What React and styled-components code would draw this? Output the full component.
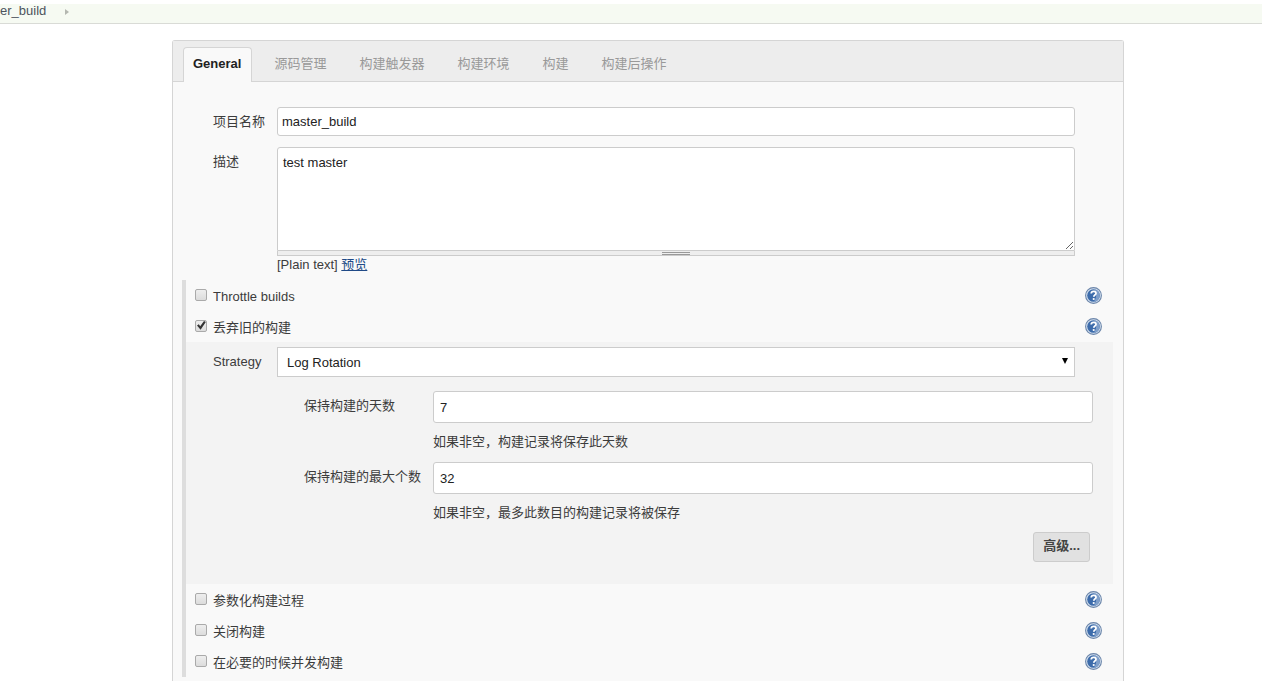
import styled, { createGlobalStyle } from "styled-components";

const GlobalStyle = createGlobalStyle`
  *,
  *::after {
    box-sizing: border-box;
  }
  body {
    margin: 0;
    background-color: white;
    color: #3c3c3c;
    font-family: "Liberation Sans", "Noto Sans CJK SC", sans-serif;
    font-size: 13px;
    line-height: 18px;
  }
  input, textarea, select, button {
    margin: 0;
    font: inherit;
  }
`;

const Page = styled.div`
  padding-top: 4px;
`;

const Breadcrumbs = styled.nav`
  display: flex;
  align-items: center;
  gap: 19px;
  height: 20px;
  padding-bottom: 6px;
  background-color: #f6faf2;
  border-bottom: 1px solid #d9dbd6;
`;
const Crumb = styled.a`
  color: #4d545d;
  text-decoration: none;
`;
const CrumbArrow = styled.span`
  border: 3px solid transparent;
  border-left: 4px solid #b4b7b0;
  border-right: 0;
  margin-top: 3px;
`;

const Panel = styled.main`
  margin: 16px 138px 0 172px;
  padding-bottom: 4px;
  background-color: #f9f9f9;
  border: 1px solid #d5d5d5;
  border-bottom: 0;
  border-radius: 3px 3px 0 0;
`;
const TabBar = styled.div`
  display: flex;
  align-items: flex-end;
  gap: 12px;
  height: 41px;
  padding-left: 10px;
  background-color: #ededed;
  border-bottom: 1px solid #d5d5d5;
`;
const Tab = styled.button`
  height: ${(props) => (props.$active ? 35 : 34)}px;
  margin-bottom: ${(props) => (props.$active ? -1 : 0)}px;
  padding: 0 10px 2px 9px;
  background-color: ${(props) => (props.$active ? "#f9f9f9" : "transparent")};
  border: 1px solid ${(props) => (props.$active ? "#d5d5d5" : "transparent")};
  border-bottom: 0;
  border-radius: 4px 4px 0 0;
  color: ${(props) => (props.$active ? "#222" : "#999")};
  font-weight: ${(props) => (props.$active ? "bold" : "normal")};
  white-space: nowrap;
`;

const Fields = styled.div`
  display: grid;
  gap: 11px;
  padding: 25px 48px 6px 40px;
`;
const Field = styled.div`
  display: grid;
  grid-template-columns: ${(props) => props.$labelWidth || 64}px 1fr;
`;
const Label = styled.label`
  padding-top: 6px;
`;
const Input = styled.input`
  display: block;
  width: 100%;
  height: ${(props) => (props.$large ? 32 : 29)}px;
  padding: 0 ${(props) => (props.$large ? 6 : 4)}px;
  background-color: white;
  border: 1px solid #ccc;
  border-radius: 3px;
  color: #222;
`;
const TextArea = styled.textarea`
  display: block;
  width: 100%;
  height: 104px;
  padding: 6px 5px;
  background-color: white;
  border: 1px solid #ccc;
  border-radius: 3px 3px 0 0;
  color: #222;
`;
const Handle = styled.div`
  display: flex;
  justify-content: center;
  align-items: center;
  height: 5px;
  background-color: #eee;
  border: 1px solid #ccc;
  border-top: 0;

  &::after {
    content: "";
    width: 28px;
    height: 3px;
    border: solid #999;
    border-width: 1px 0;
  }
`;
const Link = styled.a`
  color: #204a87;
`;

const Section = styled.section`
  margin: 0 10px 0 9px;
  border-left: 4px solid #ddd;
`;
const OptionRow = styled.div`
  display: flex;
  align-items: center;
  justify-content: space-between;
  height: 31px;
  padding: 0 11px 0 9px;
`;
const OptionLabel = styled.label`
  display: flex;
  align-items: center;
  gap: 6px;
  padding-top: 2px;
`;
const Checkbox = styled.input.attrs({ type: "checkbox" })`
  appearance: none;
  width: 12px;
  height: 12px;
  margin-bottom: 4px;
  background: linear-gradient(#eee, #dcdcdc);
  border: 1px solid #aaa;
  border-radius: 2px;

  &:checked::after {
    content: "";
    display: block;
    height: 10px;
    background-color: #333;
    clip-path: polygon(10% 50%, 28% 38%, 42% 58%, 80% 4%, 98% 16%, 46% 92%);
  }
`;
const HelpButton = styled.button`
  display: flex;
  padding: 0;
  background: none;
  border: 0;
`;

const Nested = styled.div`
  padding: 5px 0 22px;
  background-color: #f3f3f3;
`;
const StrategyField = styled(Field)`
  padding: 0 38px 0 27px;
`;
const SelectBox = styled.div`
  display: grid;
  align-items: center;

  select,
  svg {
    grid-area: 1 / 1;
  }
  svg {
    justify-self: end;
    margin: 0 7px 3px;
    pointer-events: none;
  }
`;
const Select = styled.select`
  appearance: none;
  width: 100%;
  height: 30px;
  padding: 2px 9px 0;
  background-color: white;
  border: 1px solid #ccc;
  border-radius: 0;
  color: #222;
`;
const RotationFields = styled.div`
  display: grid;
  gap: 11px;
  padding: 14px 20px 0 118px;
`;
const Hint = styled.p`
  margin: 0;
  padding-top: 10px;
`;
const Actions = styled.div`
  display: flex;
  justify-content: flex-end;
  padding: 10px 23px 0 0;
`;
const Button = styled.button`
  height: 30px;
  padding: 0 9px 2px;
  background-color: #e1e1e1;
  border: 1px solid #ccc;
  border-radius: 3px;
  color: #444;
  font-weight: bold;
`;

const tabs = ["General", "源码管理", "构建触发器", "构建环境", "构建", "构建后操作"];

function HelpIcon() {
  return (
    <svg width="17" height="17" viewBox="0 0 17 17" fill="none">
      <circle cx="8.5" cy="8.5" r="7.9" fill="#d5e1ef" stroke="#6d87ab" strokeWidth="1.1" />
      <circle cx="8.5" cy="8.5" r="6.3" fill="#3d6cab" />
      <path d="M8.5 2.2a6.3 6.3 0 0 1 0 12.6c3-3 4-8 0-12.6Z" fill="#7f9fca" />
      <path
        d="M6.2 6.5c.1-1.5 1.1-2.2 2.4-2.2 1.4 0 2.4.8 2.4 2 0 1.5-2.2 1.8-2.2 3.5"
        stroke="white"
        strokeWidth="1.8"
      />
      <circle cx="8.7" cy="12" r="1.1" fill="white" />
    </svg>
  );
}

function Option({ label, checked }) {
  return (
    <OptionRow>
      <OptionLabel>
        <Checkbox defaultChecked={checked} />
        {label}
      </OptionLabel>
      <HelpButton type="button" aria-label={`Help: ${label}`}>
        <HelpIcon />
      </HelpButton>
    </OptionRow>
  );
}

function RotationField({ id, label, value, hint }) {
  return (
    <Field $labelWidth={129}>
      <Label htmlFor={id}>{label}</Label>
      <div>
        <Input id={id} $large defaultValue={value} />
        <Hint>{hint}</Hint>
      </div>
    </Field>
  );
}

function App() {
  return (
    <Page>
      <GlobalStyle />
      <Breadcrumbs>
        <Crumb href="#">er_build</Crumb>
        <CrumbArrow />
      </Breadcrumbs>
      <Panel>
        <TabBar>
          {tabs.map((tab, index) => (
            <Tab key={tab} type="button" $active={index === 0}>
              {tab}
            </Tab>
          ))}
        </TabBar>
        <Fields>
          <Field>
            <Label htmlFor="name">项目名称</Label>
            <Input id="name" defaultValue="master_build" />
          </Field>
          <Field>
            <Label htmlFor="description">描述</Label>
            <div>
              <TextArea id="description" defaultValue="test master" />
              <Handle />
              [Plain text] <Link href="#">预览</Link>
            </div>
          </Field>
        </Fields>
        <Section>
          <Option label="Throttle builds" />
          <Option label="丢弃旧的构建" checked />
          <Nested>
            <StrategyField>
              <Label htmlFor="strategy">Strategy</Label>
              <SelectBox>
                <Select id="strategy">
                  <option>Log Rotation</option>
                </Select>
                <svg width="6" height="6" viewBox="0 0 6 6">
                  <path d="M0 0h6L3 6Z" fill="black" />
                </svg>
              </SelectBox>
            </StrategyField>
            <RotationFields>
              <RotationField
                id="days"
                label="保持构建的天数"
                value="7"
                hint="如果非空，构建记录将保存此天数"
              />
              <RotationField
                id="count"
                label="保持构建的最大个数"
                value="32"
                hint="如果非空，最多此数目的构建记录将被保存"
              />
            </RotationFields>
            <Actions>
              <Button type="button">高级...</Button>
            </Actions>
          </Nested>
          <Option label="参数化构建过程" />
          <Option label="关闭构建" />
          <Option label="在必要的时候并发构建" />
        </Section>
      </Panel>
    </Page>
  );
}

export default App;
